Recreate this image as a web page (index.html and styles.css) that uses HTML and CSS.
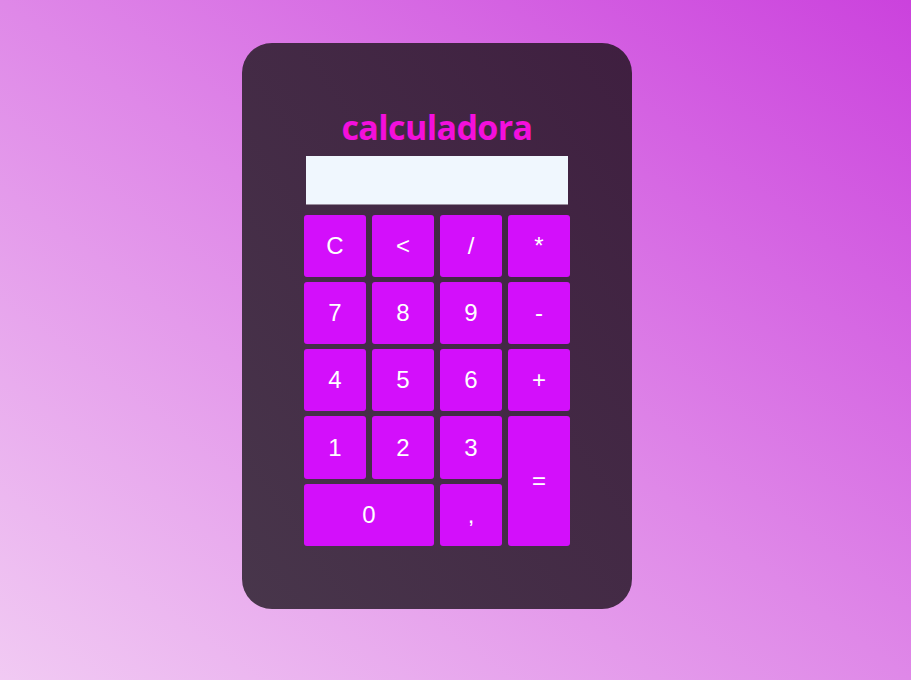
FILE: index.html
```html
<!DOCTYPE html>
<html lang="pt">
<head>
<meta charset="utf-8">
<title>calculadora</title>
<link rel="stylesheet" href="styles.css">
</head>
<body>
<div class="page">
  <div class="card">
    <h1 class="title">calculadora</h1>
    <div class="display"></div>
    <div class="keys">
      <button class="key">C</button>
      <button class="key">&lt;</button>
      <button class="key">/</button>
      <button class="key">*</button>
      <button class="key">7</button>
      <button class="key">8</button>
      <button class="key">9</button>
      <button class="key">-</button>
      <button class="key">4</button>
      <button class="key">5</button>
      <button class="key">6</button>
      <button class="key">+</button>
      <button class="key">1</button>
      <button class="key">2</button>
      <button class="key">3</button>
      <button class="key key-equals">=</button>
      <button class="key key-zero">0</button>
      <button class="key key-comma">,</button>
    </div>
  </div>
</div>
</body>
</html>
```
FILE: styles.css
```css
html, body {
  margin: 0;
  height: 100%;
}
body {
  background: linear-gradient(to top right, #f1caf3 0%, #df88e8 50%, #cb42dd 100%);
  font-family: "Liberation Sans", Arial, sans-serif;
}
.page {
  padding: 43px 0 0 242px;
}
.card {
  box-sizing: border-box;
  width: 390px;
  height: 566px;
  border-radius: 30px;
  background: linear-gradient(to top right, #48364b, #3f1f40);
  padding-top: 64px;
  display: flex;
  flex-direction: column;
  align-items: center;
}
.title {
  margin: 0;
  font-family: "Open Sans", Lato, sans-serif;
  font-weight: 700;
  font-size: 34px;
  line-height: 40px;
  letter-spacing: -0.6px;
  color: #f30fdc;
}
.display {
  box-sizing: border-box;
  width: 262px;
  height: 49px;
  margin-top: 9px;
  background: #f0f7fe;
  border-bottom: 1px solid #9a8e9e;
}
.keys {
  margin-top: 10px;
  display: grid;
  grid-template-columns: repeat(4, 62px);
  grid-template-rows: 62px 62px 62px 63px 62px;
  column-gap: 6px;
  row-gap: 5px;
}
.key {
  border: none;
  border-radius: 3px;
  background: #d30ffb;
  color: #ffffff;
  font-family: "Liberation Sans", Arial, sans-serif;
  font-size: 24px;
  padding: 0;
  cursor: pointer;
}
.key-equals {
  grid-column: 4;
  grid-row: 4 / span 2;
}
.key-zero {
  grid-column: 1 / span 2;
  grid-row: 5;
}
.key-comma {
  grid-column: 3;
  grid-row: 5;
}
```
